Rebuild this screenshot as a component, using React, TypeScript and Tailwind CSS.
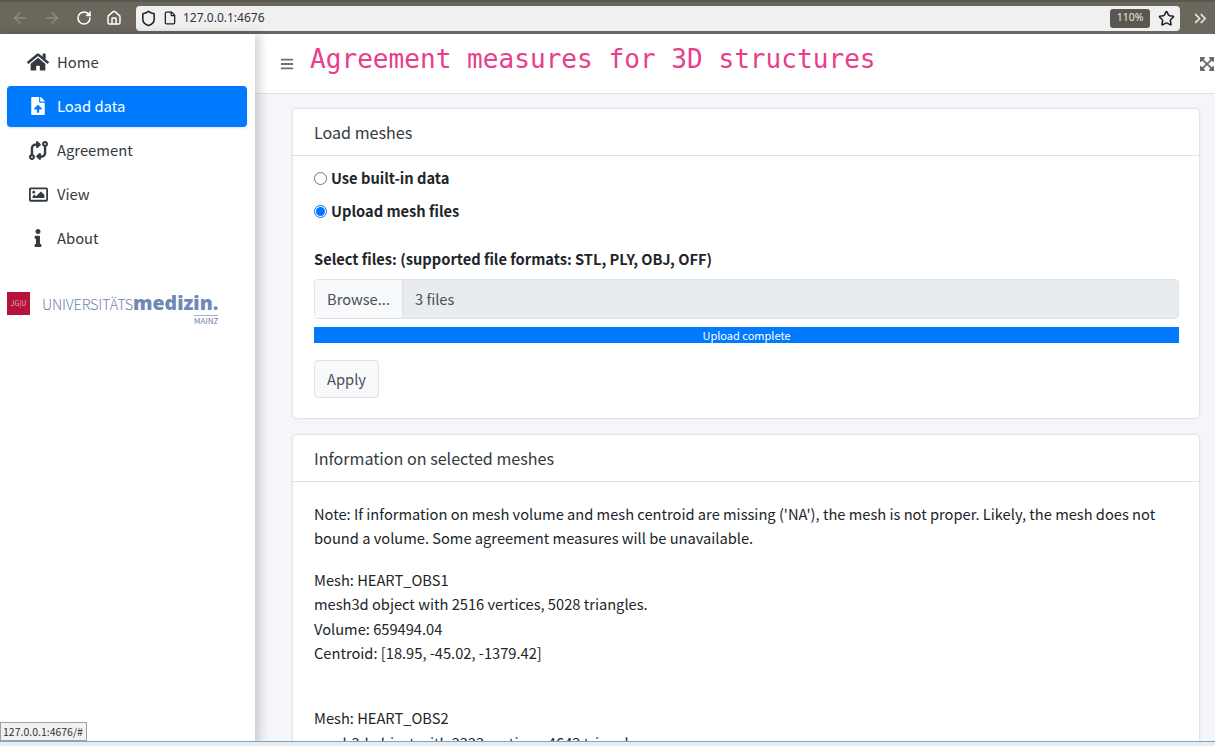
import { ArrowLeft, ArrowRight, RotateCw, Home, Shield, File, Star, ChevronsRight } from 'lucide-react'
import { FaHome, FaFileUpload, FaRegImage, FaInfo, FaBars, FaExpandArrowsAlt } from 'react-icons/fa'
import { FaCodeCompare } from 'react-icons/fa6'

const font = { fontFamily: '"Noto Sans CJK SC", sans-serif' }

function BrowserBar() {
  return (
    <div className="h-[34px] shrink-0 bg-[#6b675c] flex items-center border-t-[2px] border-[#5a574e]">
      <div className="w-[136px] shrink-0 flex items-center pl-[11px] gap-[14px]">
        <ArrowLeft size={18} className="text-[#8f8c83]" />
        <ArrowRight size={18} className="text-[#8f8c83]" />
        <RotateCw size={16} strokeWidth={2.4} className="text-white ml-[1px]" />
        <Home size={16} strokeWidth={2.2} className="text-white" />
      </div>
      <div className="flex-1 h-[25px] bg-[#f0f0f0] rounded-[4px] flex items-center pl-[4px] pr-[4px]">
        <Shield size={17} strokeWidth={2.2} className="text-[#222]" />
        <File size={14} strokeWidth={2.2} className="text-[#222] ml-[6px]" />
        <span className="ml-[6px] text-[12px] text-[#333]" style={{ fontFamily: '"Noto Sans", sans-serif' }}>127.0.0.1:4676</span>
        <div className="ml-auto w-[40px] h-[19px] bg-[#5b574e] rounded-[3px] flex items-center justify-center text-[10.5px] text-[#e8e8e8]" style={{ fontFamily: '"Noto Sans", sans-serif' }}>110%</div>
        <Star size={17} strokeWidth={2.2} className="text-[#222] ml-[8px] mr-[1px]" />
      </div>
      <div className="w-[35px] shrink-0 flex justify-center pl-[5px]">
        <ChevronsRight size={19} strokeWidth={2.2} className="text-[#e6e6e6]" />
      </div>
    </div>
  )
}

function NavItem({ icon, label, active }: { icon: React.ReactNode; label: string; active?: boolean }) {
  return (
    <div
      className={
        active
          ? 'h-[41px] ml-[7px] mr-[8px] rounded-[4px] bg-[#007bff] text-white flex items-center shadow-sm'
          : 'h-[41px] ml-[7px] mr-[8px] rounded-[4px] text-[#343a40] flex items-center'
      }
    >
      <div className="w-[50px] -mt-px flex justify-center pl-[12px] text-[18px]">{icon}</div>
      <span className="-mt-px text-[14.8px] leading-[22px]">{label}</span>
    </div>
  )
}

function Sidebar() {
  return (
    <div className="w-[255px] shrink-0 bg-white flex flex-col pt-[8px] shadow-[4px_0_10px_rgba(0,0,0,0.2)] z-10">
      <div className="flex flex-col gap-[3px]">
        <NavItem icon={<FaHome className="text-[22px]" />} label="Home" />
        <NavItem active icon={<FaFileUpload />} label="Load data" />
        <NavItem icon={<FaCodeCompare className="text-[19px]" />} label="Agreement" />
        <NavItem icon={<FaRegImage className="text-[19px]" />} label="View" />
        <NavItem icon={<FaInfo className="text-[18px]" />} label="About" />
      </div>
      <div className="flex items-start mt-[33px] pl-[7px]">
        <div className="w-[23px] h-[23px] bg-[#b5133a] text-[#e9a9b8] text-[7px] flex items-center justify-center shrink-0">JG|U</div>
        <div className="ml-[12px] flex flex-col items-end">
          <div className="flex items-baseline text-[#6f86a8] leading-[22px]">
            <span className="text-[14.5px] tracking-[-0.2px] font-light">UNIVERSITÄTS</span>
            <span className="text-[#7088b4] text-[19.5px] font-extrabold" style={{ fontFamily: '"Open Sans", sans-serif' }}>medizin.</span>
          </div>
          <div className="text-[8px] leading-[10px] text-[#6f86a8] border-t border-[#9fb0c8]">MAINZ</div>
        </div>
      </div>
    </div>
  )
}

function Card({ title, children }: { title: string; children: React.ReactNode }) {
  return (
    <div className="bg-white rounded-[4px] shadow-[0_0_3px_rgba(0,0,0,0.2)] shrink-0">
      <div className="h-[47px] px-[21px] flex items-center border-b border-[#dfe3e6] text-[16.1px] leading-[24px] text-[#343a40]">{title}</div>
      {children}
    </div>
  )
}

function Radio({ label, checked }: { label: string; checked?: boolean }) {
  return (
    <div className="flex items-center h-[24px] gap-[4px]">
      <div className={checked ? 'w-[13px] h-[13px] rounded-full border border-[#0075ff] flex items-center justify-center' : 'w-[13px] h-[13px] rounded-full border border-[#767676]'}>
        {checked && <div className="w-[9px] h-[9px] rounded-full bg-[#0075ff]" />}
      </div>
      <span className="text-[14.67px] leading-[22px] font-bold text-[#212529]">{label}</span>
    </div>
  )
}

export default function App() {
  return (
    <div className="w-[1215px] h-[746px] overflow-hidden flex flex-col relative" style={font}>
      <BrowserBar />
      <div className="flex flex-1 min-h-0">
        <Sidebar />
        <div className="flex-1 flex flex-col min-w-0">
          <div className="h-[60px] shrink-0 bg-white border-b border-[#dee2e6] flex items-center pl-[25px]">
            <FaBars className="text-[14px] text-[#6b7177]" />
            <span className="ml-[16px] -mt-[7px] text-[26.1px] text-[#e83e8c]" style={{ fontFamily: '"DejaVu Sans Mono", monospace' }}>
              Agreement measures for 3D structures
            </span>
            <FaExpandArrowsAlt className="ml-auto text-[16px] text-[#666b70]" />
          </div>
          <div className="flex-1 bg-[#f4f6f9] pt-[15px] pl-[38px] pr-[16px] flex flex-col gap-[17px] overflow-hidden">
            <Card title="Load meshes">
              <div className="pl-[21px] pr-[20px] pt-[10px] pb-[20px]">
                <div className="flex flex-col gap-[9px]">
                  <Radio label="Use built-in data" />
                  <Radio checked label="Upload mesh files" />
                </div>
                <div className="mt-[24px] text-[14.67px] font-bold text-[#212529] leading-[24px]">Select files: (supported file formats: STL, PLY, OBJ, OFF)</div>
                <div className="mt-[8px] h-[40px] flex rounded-[4px] border border-[#dee2e6] overflow-hidden text-[14.67px] leading-[22px] text-[#495057]">
                  <div className="w-[88px] flex items-center justify-center bg-[#f8f9fa] border-r border-[#dee2e6]">Browse...</div>
                  <div className="flex-1 bg-[#e9ecef] flex items-center pl-[12px]">3 files</div>
                </div>
                <div className="mt-[8px] h-[16px] bg-[#007bff] text-white text-[11px] leading-[16px] flex items-center justify-center">Upload complete</div>
                <div className="mt-[17px] w-[65px] h-[38px] rounded-[4px] border border-[#dee2e6] bg-[#f8f9fa] flex items-center justify-center text-[14.67px] leading-[22px] text-[#495057]">Apply</div>
              </div>
            </Card>
            <Card title="Information on selected meshes">
              <div className="px-[21px] pt-[20px] text-[14.67px] leading-[24.4px] text-[#212529]">
                <p>Note: If information on mesh volume and mesh centroid are missing ('NA'), the mesh is not proper. Likely, the mesh does not bound a volume. Some agreement measures will be unavailable.</p>
                <p className="mt-[17px]">
                  Mesh: HEART_OBS1<br />
                  mesh3d object with 2516 vertices, 5028 triangles.<br />
                  Volume: 659494.04<br />
                  Centroid: [18.95, -45.02, -1379.42]
                </p>
                <p className="mt-[41px]">
                  Mesh: HEART_OBS2<br />
                  mesh3d object with 2323 vertices, 4642 triangles.
                </p>
              </div>
            </Card>
          </div>
        </div>
      </div>
      <div className="absolute left-0 bottom-[5px] h-[19px] w-[87px] bg-[#f2f2f2] border border-[#a0a0a0] text-[10.5px] leading-[16px] text-[#333] flex items-center pl-[2px] z-20">127.0.0.1:4676/#</div>
      <div className="absolute left-0 right-0 bottom-0 h-[5px] bg-[#e8ecef] border-t border-[#6fa8d6] z-20" />
    </div>
  )
}
